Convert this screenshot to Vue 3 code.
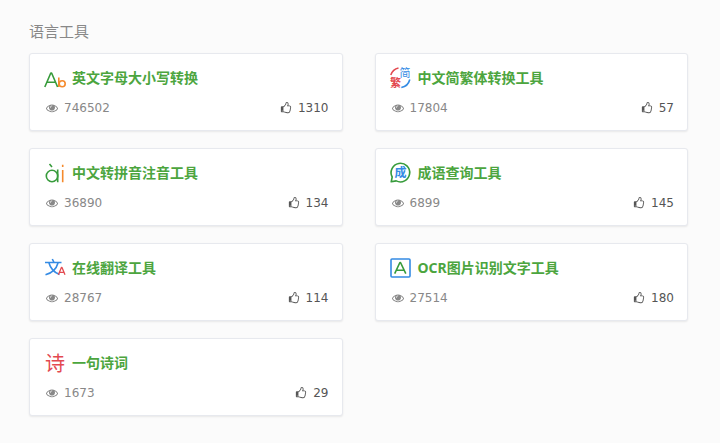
<script setup>
const tools = [
  { id: 'case', name: '英文字母大小写转换', views: 746502, likes: 1310 },
  { id: 'hans', name: '中文简繁体转换工具', views: 17804, likes: 57 },
  { id: 'pinyin', name: '中文转拼音注音工具', views: 36890, likes: 134 },
  { id: 'idiom', name: '成语查询工具', views: 6899, likes: 145 },
  { id: 'translate', name: '在线翻译工具', views: 28767, likes: 114 },
  { id: 'ocr', name: 'OCR图片识别文字工具', views: 27514, likes: 180 },
  { id: 'poem', name: '一句诗词', views: 1673, likes: 29 },
]
</script>

<template>
  <main class="page">
    <h2 class="heading">语言工具</h2>
    <div class="grid">
      <article v-for="tool in tools" :key="tool.id" class="card">
        <a class="title" :href="'#' + tool.id">
          <svg class="logo" viewBox="0 0 24 24" aria-hidden="true">
            <template v-if="tool.id === 'case'">
              <path class="line green" d="M0.800 21 6.800 7h.8L13.600 21M3 16.200h8.500" />
              <path class="line orange" d="M14.800 11.500V21" />
              <circle class="line orange" cx="18.200" cy="17.800" r="3" />
            </template>
            <template v-else-if="tool.id === 'hans'">
              <path class="line red" d="M.8 9C2 5.500 4.800 2.800 8.500 2" />
              <path class="line blue" d="M19.800 13.500c-1 4-4 7.200-8.500 8" />
              <text class="han blue" x="9.500" y="11.300" font-size="11">简</text>
              <text class="han bold red" x="0" y="20.800" font-size="11">繁</text>
            </template>
            <template v-else-if="tool.id === 'pinyin'">
              <circle class="line green" cx="8" cy="15" r="5.700" />
              <path class="line green" d="M13.700 8.500V21.300M5.500 3 8 6" />
              <path class="line orange" d="M18.700 9V21.300M18.700 3.800v2.200" />
            </template>
            <template v-else-if="tool.id === 'idiom'">
              <path class="line green" d="M1.200 20.800 2.200 16A9.300 9.300 0 1 1 6.200 19.900Z" />
              <text class="han bold blue" x="4.500" y="15.800" font-size="12">成</text>
            </template>
            <template v-else-if="tool.id === 'translate'">
              <path class="line blue" d="M1 6.500h16.500M8.300 3l1.500 3M5 7c1.500 5.500 5.500 9.500 10.500 11.500M14 7C12.500 12.500 8 17 1.500 18.800" />
              <path class="line thin red" d="M14.400 18.700l3-7.200h.6l3 7.200M15.400 16.300h4.600" />
            </template>
            <template v-else-if="tool.id === 'ocr'">
              <rect class="line blue" x="1" y="3" width="19" height="18" rx="1" />
              <path class="line green" d="M4.700 17.700 9.900 6.500h.6L15.800 17.700M6.500 14.200h7.600" />
            </template>
            <template v-else>
              <text class="han red" x="1" y="19.500" font-size="20">诗</text>
            </template>
          </svg>
          <span>{{ tool.name }}</span>
        </a>
        <div class="meta">
          <span class="views">
            <svg class="glyph" viewBox="0 0 1792 1792" aria-hidden="true">
              <path d="M1664 960q-152-236-381-353 61 104 61 225 0 185-131.500 316.500t-316.500 131.500-316.500-131.500-131.500-316.500q0-121 61-225-229 117-381 353 133 205 333.500 326.500t434.500 121.500 434.500-121.500 333.500-326.500zm-720-384q0-20-14-34t-34-14q-125 0-214.500 89.500t-89.500 214.500q0 20 14 34t34 14 34-14 14-34q0-86 61-147t147-61q20 0 34-14t14-34zm848 384q0 34-20 69-140 230-376.500 368.500t-499.500 138.500-499.500-139-376.500-368q-20-35-20-69t20-69q140-229 376.500-368t499.500-139 499.500 139 376.500 368q20 35 20 69z" />
            </svg>
            {{ tool.views }}
          </span>
          <button type="button" class="like">
            <svg class="glyph" viewBox="0 0 1792 1792" aria-hidden="true">
              <path d="M384 1344q0-26-19-45t-45-19-45 19-19 45 19 45 45 19 45-19 19-45zm1152-576q0-51-39-89.500t-89-38.500h-352q0-58 48-159.500t48-160.500q0-98-32-145t-128-47q-26 26-38 85t-30.500 125.500-59.500 109.500q-22 23-77 91-4 5-23 30t-31.500 41-34.500 42.500-40 44-38.500 35.500-40 27-35.500 9h-32v640h32q13 0 31.500 3t33 6.500 38 11 35 11.500 35.500 12.500 29 10.500q211 73 342 73h121q192 0 192-167 0-26-5-56 30-16 47.500-52.500t17.500-73.500-18-69q53-50 53-119 0-25-10-55.500t-25-47.500q32-1 53.500-47t21.500-81zm128-1q0 89-49 163 9 33 9 69 0 77-38 144 3 21 3 43 0 101-60 178 1 139-85 219.500t-227 80.500h-129q-96 0-189.500-22.500t-216.500-65.500q-116-40-138-40h-288q-53 0-90.500-37.500t-37.500-90.500v-640q0-53 37.500-90.500t90.500-37.500h274q36-24 137-155 58-75 107-128 24-25 35.500-85.500t30.500-126.500 62-108q39-37 90-37 84 0 151 32.500t102 101.500 35 186q0 93-48 192h176q104 0 180 76t76 179z" />
            </svg>
            {{ tool.likes }}
          </button>
        </div>
      </article>
    </div>
  </main>
</template>

<style>
body {
  margin: 0;
  background: #fbfbfb;
}
</style>

<style scoped>
.page {
  padding: 19px 32px 26px 29px;
  font-family: "DejaVu Sans", "Noto Sans CJK SC", sans-serif;
}
.heading {
  margin: 0 0 10px;
  font: 400 15px/24px "Noto Sans CJK SC", sans-serif;
  color: #888;
}
.grid {
  display: grid;
  grid-template-columns: repeat(2, minmax(0, 1fr));
  gap: 17px 32px;
}
.card {
  display: flex;
  flex-direction: column;
  gap: 8px;
  padding: 12px 13px 12px 14px;
  border: 1px solid #e7e9ee;
  border-radius: 3px;
  background: #fff;
  box-shadow: 0 1px 2px rgba(0, 0, 0, 0.08);
}
.title {
  display: flex;
  align-items: center;
  gap: 4px;
  font: 700 14px/24px "Noto Sans", "Noto Sans CJK SC", sans-serif;
  color: #4ca53e;
  text-decoration: none;
}
.logo {
  flex: none;
  width: 24px;
  height: 24px;
  overflow: visible;
}
.line {
  fill: none;
  stroke-width: 1.6;
  stroke-linejoin: round;
}
.thin {
  stroke-width: 1.3;
}
.line.green { stroke: #379b3b; }
.line.blue { stroke: #348be4; }
.line.red { stroke: #e34950; }
.line.orange { stroke: #f58a2c; }
text.blue { fill: #348be4; }
text.red { fill: #e34950; }
.han {
  font-family: "Noto Sans CJK SC", sans-serif;
  font-weight: 400;
}
.han.bold {
  font-weight: 700;
}
.meta {
  display: flex;
  align-items: center;
  justify-content: space-between;
  font-size: 12px;
  line-height: 20px;
}
.views,
.like {
  display: flex;
  align-items: center;
  gap: 6px;
}
.views {
  padding-left: 2px;
  color: #888;
}
.like {
  padding: 0;
  border: 0;
  background: none;
  font: inherit;
  color: #555;
  cursor: pointer;
}
.glyph {
  width: 12px;
  height: 12px;
  fill: currentColor;
}
</style>
